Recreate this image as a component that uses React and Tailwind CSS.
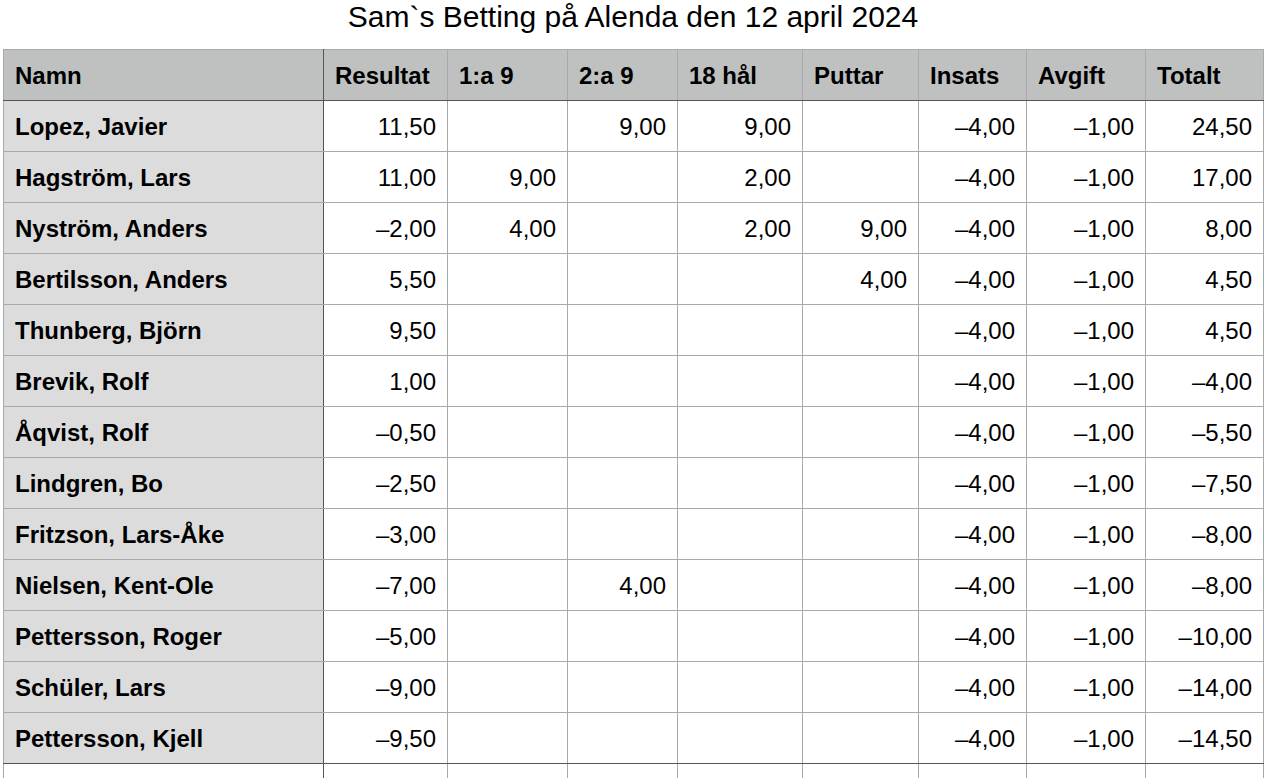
const cols = [
  { label: 'Namn', w: 320 },
  { label: 'Resultat', w: 124 },
  { label: '1:a 9', w: 120 },
  { label: '2:a 9', w: 110 },
  { label: '18 hål', w: 125 },
  { label: 'Puttar', w: 116 },
  { label: 'Insats', w: 108 },
  { label: 'Avgift', w: 119 },
  { label: 'Totalt', w: 118 },
];

const rows = [
  ['Lopez, Javier', '11,50', '', '9,00', '9,00', '', '–4,00', '–1,00', '24,50'],
  ['Hagström, Lars', '11,00', '9,00', '', '2,00', '', '–4,00', '–1,00', '17,00'],
  ['Nyström, Anders', '–2,00', '4,00', '', '2,00', '9,00', '–4,00', '–1,00', '8,00'],
  ['Bertilsson, Anders', '5,50', '', '', '', '4,00', '–4,00', '–1,00', '4,50'],
  ['Thunberg, Björn', '9,50', '', '', '', '', '–4,00', '–1,00', '4,50'],
  ['Brevik, Rolf', '1,00', '', '', '', '', '–4,00', '–1,00', '–4,00'],
  ['Åqvist, Rolf', '–0,50', '', '', '', '', '–4,00', '–1,00', '–5,50'],
  ['Lindgren, Bo', '–2,50', '', '', '', '', '–4,00', '–1,00', '–7,50'],
  ['Fritzson, Lars-Åke', '–3,00', '', '', '', '', '–4,00', '–1,00', '–8,00'],
  ['Nielsen, Kent-Ole', '–7,00', '', '4,00', '', '', '–4,00', '–1,00', '–8,00'],
  ['Pettersson, Roger', '–5,00', '', '', '', '', '–4,00', '–1,00', '–10,00'],
  ['Schüler, Lars', '–9,00', '', '', '', '', '–4,00', '–1,00', '–14,00'],
  ['Pettersson, Kjell', '–9,50', '', '', '', '', '–4,00', '–1,00', '–14,50'],
];

export default function App() {
  return (
    <div className="w-[1274px] h-[778px] overflow-hidden bg-white text-black" style={{ fontFamily: '"Liberation Sans", Arial, sans-serif' }}>
      <div className="w-[1260px] ml-[3px] h-[49px] flex items-start justify-center pt-0 text-[30px] leading-[34px]">
        Sam`s Betting på Alenda den 12 april 2024
      </div>
      <table className="ml-[3px] table-fixed border-collapse w-[1260px]">
        <colgroup>
          {cols.map((c) => (
            <col key={c.label} style={{ width: c.w }} />
          ))}
        </colgroup>
        <thead>
          <tr className="h-[51px] bg-[#bfc1c0]">
            {cols.map((c, i) => (
              <th
                key={c.label}
                className={`text-left font-bold text-[24px] leading-[28px] pl-[11px] pr-0 pt-[2px] whitespace-nowrap border border-[#a9a9a9] border-b-[#555555] ${i === 0 ? 'border-r-[#555555]' : ''}`}
              >
                {c.label}
              </th>
            ))}
          </tr>
        </thead>
        <tbody>
          {rows.map((r, ri) => (
            <tr key={ri} className="h-[51px]">
              {r.map((v, i) =>
                i === 0 ? (
                  <td
                    key={i}
                    className={`bg-[#dcdcdc] font-bold text-[24px] leading-[28px] pl-[11px] pt-[2px] border border-[#a9a9a9] border-r-[#555555] ${ri === rows.length - 1 ? 'border-b-[#555555]' : ''}`}
                  >
                    {v}
                  </td>
                ) : (
                  <td
                    key={i}
                    className={`text-right text-[24px] leading-[28px] pr-[11px] pt-[2px] border border-[#a9a9a9] ${ri === rows.length - 1 ? 'border-b-[#555555]' : ''}`}
                  >
                    {v}
                  </td>
                )
              )}
            </tr>
          ))}
          <tr className="h-[51px]">
            {cols.map((c, i) => (
              <td key={c.label} className={`border border-[#a9a9a9] ${i === 0 ? 'border-r-[#555555]' : ''}`} />
            ))}
          </tr>
        </tbody>
      </table>
    </div>
  );
}
